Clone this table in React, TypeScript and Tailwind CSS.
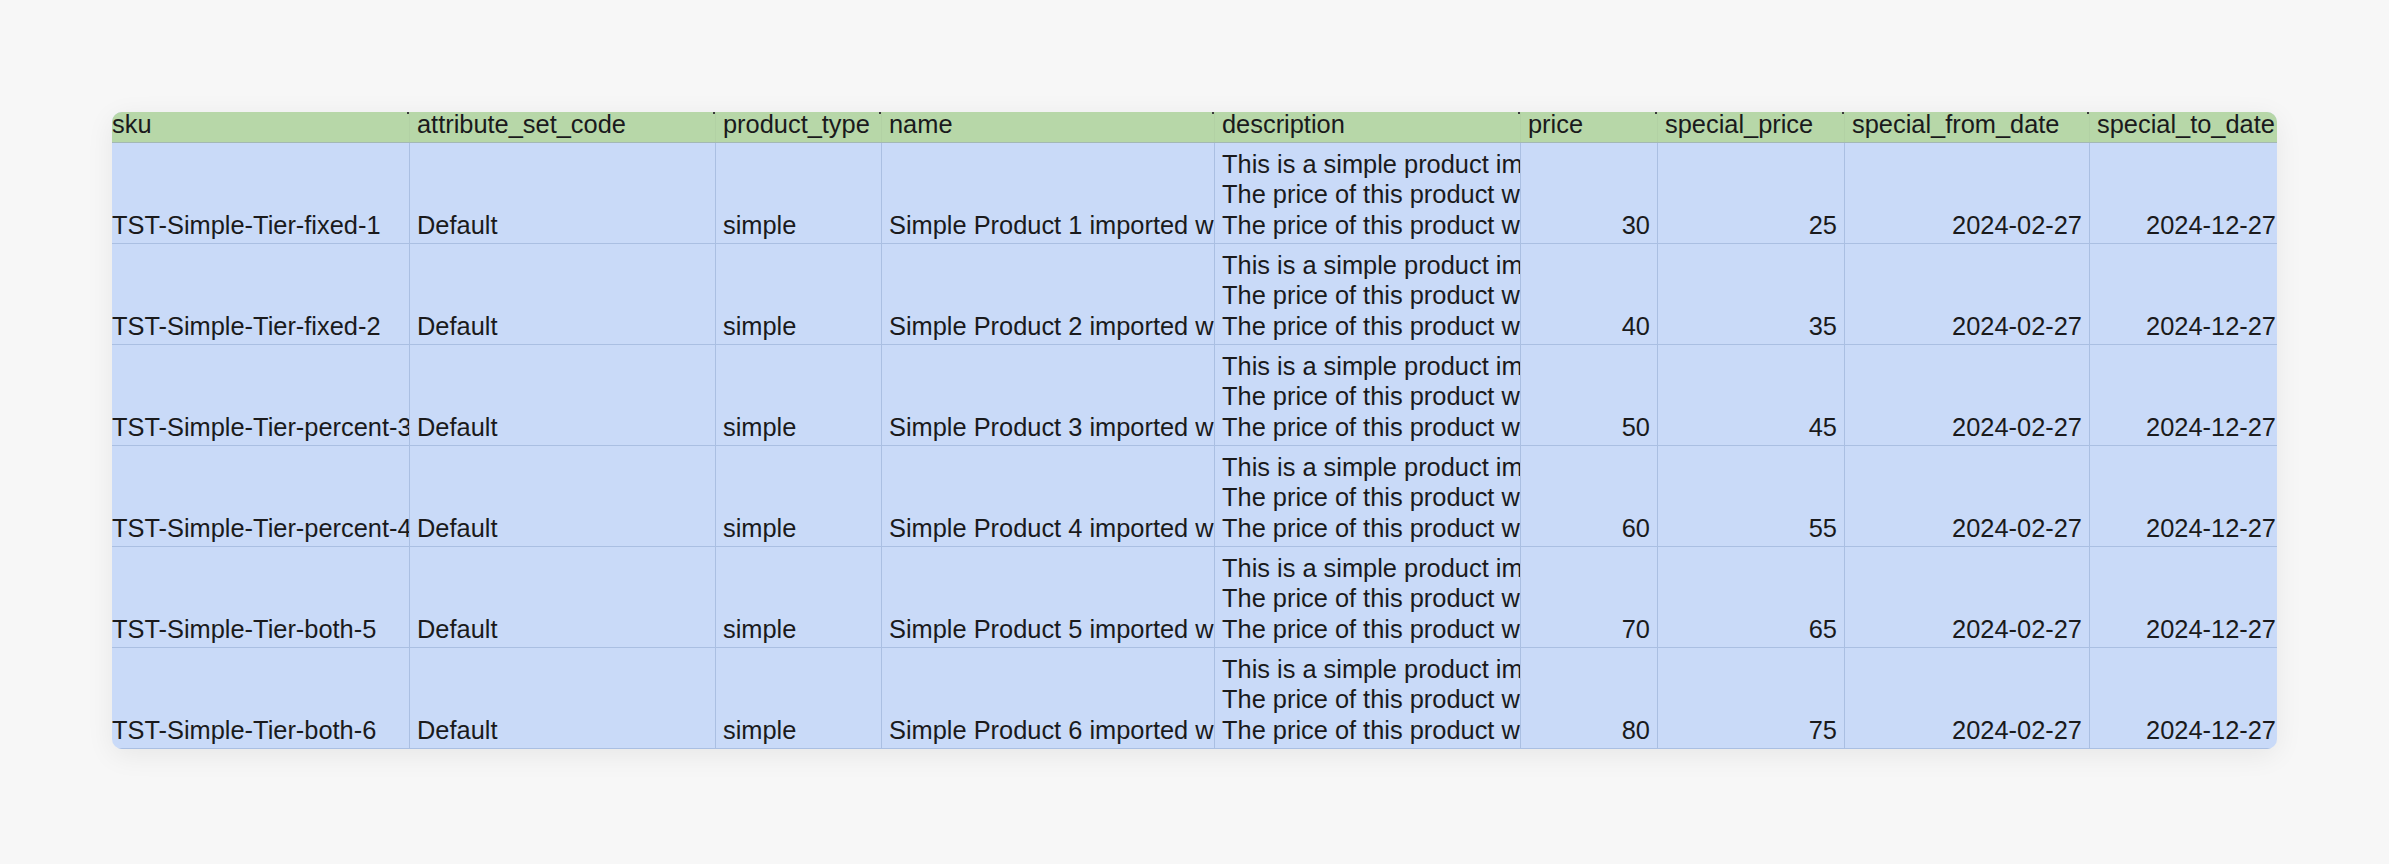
import React from 'react';

type Col = {
  key: string;
  width: string;
  align: 'left' | 'right';
};

const columns: Col[] = [
  { key: 'sku', width: 'w-[298px]', align: 'left' },
  { key: 'attribute_set_code', width: 'w-[306px]', align: 'left' },
  { key: 'product_type', width: 'w-[166px]', align: 'left' },
  { key: 'name', width: 'w-[333px]', align: 'left' },
  { key: 'description', width: 'w-[306px]', align: 'left' },
  { key: 'price', width: 'w-[137px]', align: 'right' },
  { key: 'special_price', width: 'w-[187px]', align: 'right' },
  { key: 'special_from_date', width: 'w-[245px]', align: 'right' },
  { key: 'special_to_date', width: 'w-[194px]', align: 'right' },
];

const products = [
  { sku: 'TST-Simple-Tier-fixed-1', n: 1, price: 30, special: 25 },
  { sku: 'TST-Simple-Tier-fixed-2', n: 2, price: 40, special: 35 },
  { sku: 'TST-Simple-Tier-percent-3', n: 3, price: 50, special: 45 },
  { sku: 'TST-Simple-Tier-percent-4', n: 4, price: 60, special: 55 },
  { sku: 'TST-Simple-Tier-both-5', n: 5, price: 70, special: 65 },
  { sku: 'TST-Simple-Tier-both-6', n: 6, price: 80, special: 75 },
];

const descLines = [
  'This is a simple product imported with tier prices.',
  'The price of this product will be reduced for bulk orders.',
  'The price of this product will also show a special price.',
];

const Cell = ({ col, children, first }: { col: Col; children: React.ReactNode; first?: boolean }) => (
  <div
    className={`${col.width} shrink-0 h-full flex flex-col justify-end overflow-hidden whitespace-nowrap border-r border-[#aabfe2] pb-[3px] leading-[30px] ${
      col.align === 'right' ? 'items-end pr-[7px]' : first ? 'items-start pl-0' : 'items-start pl-[7px]'
    }`}
  >
    {children}
  </div>
);

export default function App() {
  return (
    <div className="min-h-screen h-[864px] bg-[#f7f7f7] pt-[112px] pl-[112px] font-['Liberation_Sans',Arial,sans-serif] text-[25.4px] text-[#1a1a1c]">
      <div className="w-[2165px] h-[637px] rounded-[10px] overflow-hidden bg-[#c9daf8] shadow-[0_6px_28px_rgba(0,0,0,0.07)]">
        {/* header row */}
        <div className="flex h-[31px] bg-[#b7d7a8] border-b border-[#a3b8b4]">
          {columns.map((col, i) => (
            <div
              key={col.key}
              className={`${col.width} shrink-0 relative overflow-hidden whitespace-nowrap leading-[24px] border-r border-[#b2d1a4] ${
                i === 0 ? 'pl-0' : 'pl-[7px]'
              }`}
            >
              {col.key}
              <span className="absolute right-0 top-0 w-[2px] h-[2px] bg-[#3a3a3a]" />
            </div>
          ))}
        </div>

        {/* body rows */}
        {products.map(p => (
          <div key={p.sku} className="flex h-[101px] border-b border-[#aabfe2]">
            <Cell col={columns[0]} first>{p.sku}</Cell>
            <Cell col={columns[1]}>Default</Cell>
            <Cell col={columns[2]}>simple</Cell>
            <Cell col={columns[3]}>Simple Product {p.n} imported with tier prices</Cell>
            <Cell col={columns[4]}>
              {descLines.map(line => (
                <span key={line} className="block leading-[30.5px]">{line}</span>
              ))}
            </Cell>
            <Cell col={columns[5]}>{p.price}</Cell>
            <Cell col={columns[6]}>{p.special}</Cell>
            <Cell col={columns[7]}>2024-02-27</Cell>
            <Cell col={columns[8]}>2024-12-27</Cell>
          </div>
        ))}
      </div>
    </div>
  );
}
